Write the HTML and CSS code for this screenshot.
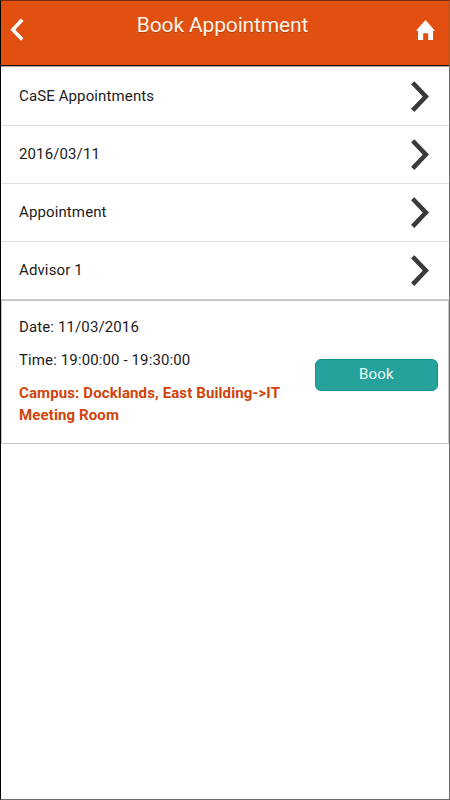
FILE: index.html
```
<!DOCTYPE html>
<html lang="en">

<head>
    <meta charset="UTF-8">
    <meta name="viewport" content="width=device-width, initial-scale=1.0">
    <title>Book Appointment</title>
    <link rel="stylesheet" href="styles.css">
</head>

<body>

    <div class="page">
        <header class="header">
            <a class="back" href="#" aria-label="Back">
                <svg width="14" height="24" viewBox="0 0 14 24">
                    <path d="M12.2 1.8L2.8 11.7l9.4 9.9" fill="none" stroke="#fff" stroke-width="3.6"/>
                </svg>
            </a>
            <h1>Book Appointment</h1>
            <a class="home" href="#" aria-label="Home">
                <svg width="19" height="20" viewBox="0 0 19 20">
                    <path d="M9.5 0L19 10.8h-2V20h-4.8v-6.7H7.2V20H2v-9.2H0z" fill="#fff"/>
                </svg>
            </a>
        </header>

        <ul class="options">
            <li>
                <span>CaSE Appointments</span>
                <svg class="arrow" viewBox="0 0 20 32"><path d="M2.7 2.8L15.9 16.6 2.7 30.4"/></svg>
            </li>
            <li>
                <span>2016/03/11</span>
                <svg class="arrow" viewBox="0 0 20 32"><path d="M2.7 2.8L15.9 16.6 2.7 30.4"/></svg>
            </li>
            <li>
                <span>Appointment</span>
                <svg class="arrow" viewBox="0 0 20 32"><path d="M2.7 2.8L15.9 16.6 2.7 30.4"/></svg>
            </li>
            <li>
                <span>Advisor 1</span>
                <svg class="arrow" viewBox="0 0 20 32"><path d="M2.7 2.8L15.9 16.6 2.7 30.4"/></svg>
            </li>
        </ul>

        <div class="slot">
            <div class="details">
                <p>Date: 11/03/2016</p>
                <p>Time: 19:00:00 - 19:30:00</p>
                <p class="campus">Campus: Docklands, East Building-&gt;IT Meeting Room</p>
            </div>
            <button type="button">Book</button>
        </div>
    </div>

</body>

</html>
```
FILE: styles.css
```
* {
    box-sizing: border-box;
}

body {
    margin: 0;
    font-family: Roboto, sans-serif;
    font-size: 15px;
    letter-spacing: 0.12px;
    color: #1c1c1c;
    background-color: #fff;
}

.page {
    height: 800px;
    border: 1px solid #6e6e6e;
    border-top-color: #74290f;
    border-left-color: #000;
}

.header {
    display: flex;
    justify-content: space-between;
    height: 65px;
    padding: 17px 14px 0 9px;
    background-color: #e25010;
    border-bottom: 1px solid #1c0805;
    box-shadow: 0 1px 0 #b5aaa8;
}

.header h1 {
    margin: -7px 0 0;
    padding-left: 5px;
    font-size: 21px;
    line-height: 28px;
    font-weight: 400;
    letter-spacing: -0.15px;
    color: #fff3e6;
    text-shadow: 0 1px 1px rgba(0, 0, 0, 0.2);
}

.header svg {
    display: block;
}

.home {
    padding-top: 2px;
}

.options {
    margin: 0;
    padding: 2px 0 0;
    list-style: none;
}

.options li {
    display: flex;
    align-items: center;
    justify-content: space-between;
    height: 58px;
    padding: 0 19px 2px 18px;
    border-bottom: 1px solid #e0e0e0;
}

.options li:last-child {
    border-bottom-color: #cfcfcf;
}

.arrow {
    width: 20px;
    height: 32px;
    fill: none;
    stroke: #3a3a3a;
    stroke-width: 4.5;
}

.slot {
    display: flex;
    justify-content: space-between;
    height: 144px;
    padding: 15px 10px 0 17px;
    border: 1px solid #c4c4c4;
}

.details {
    width: 275px;
}

.details p {
    margin: 0 0 11px;
    line-height: 22px;
}

.details .campus {
    font-weight: 700;
    color: #d1430b;
}

button {
    width: 123px;
    height: 32px;
    margin-top: 43px;
    padding: 0 0 2px;
    font: inherit;
    letter-spacing: 0.2px;
    color: #e6fffb;
    background-color: #26a29c;
    border: 1px solid #16948c;
    border-radius: 6px;
}
```
